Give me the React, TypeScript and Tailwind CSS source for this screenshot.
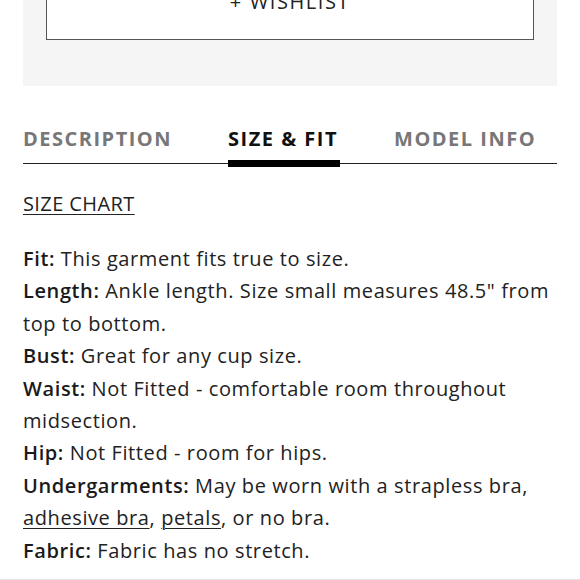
import React from 'react';

const font = { fontFamily: '"Open Sans", "Liberation Sans", sans-serif' };

const Label: React.FC<{ children: React.ReactNode }> = ({ children }) => (
  <span className="font-semibold text-[#1a1a1a]">{children}</span>
);

export default function App() {
  const tabs = [
    { label: 'DESCRIPTION', active: false },
    { label: 'SIZE & FIT', active: true },
    { label: 'MODEL INFO', active: false },
  ];

  return (
    <div className="w-[580px] h-[580px] overflow-hidden bg-white text-[#222] flex flex-col" style={font}>
      <div className="mx-[23px] h-[86px] shrink-0 bg-[#f5f5f5] px-[23px] flex flex-col">
        <div className="-mt-[30px] h-[70px] border border-[#555] bg-white flex items-center justify-center">
          <span className="text-[20px] tracking-[0.08em] text-[#222] pb-[6px]">+ WISHLIST</span>
        </div>
      </div>

      <div className="ml-[23px] w-[534px] mt-[38px]">
        <div className="flex gap-[56px] border-b border-[#222]">
          {tabs.map(t => (
            <div key={t.label} className="relative pb-[9px]">
              <span
                className={`text-[20px] font-bold tracking-[0.075em] ${
                  t.active ? 'text-[#111]' : 'text-[#777]'
                }`}
              >
                {t.label}
              </span>
              {t.active && (
                <div className="absolute left-0 right-[-2px] bottom-[-4px] h-[7px] bg-black" />
              )}
            </div>
          ))}
        </div>

        <div className="mt-[25px]">
          <a
            href="#"
            className="text-[20px] tracking-[0.02em] underline underline-offset-[3px] decoration-1 text-[#222]"
          >
            SIZE CHART
          </a>
        </div>

        <div className="mt-[24px] w-[560px] text-[20px] tracking-[0.03em] leading-[32.4px]">
          <p><Label>Fit:</Label> This garment fits true to size.</p>
          <p><Label>Length:</Label> Ankle length. Size small measures 48.5" from top to bottom.</p>
          <p><Label>Bust:</Label> Great for any cup size.</p>
          <p><Label>Waist:</Label> Not Fitted - comfortable room throughout midsection.</p>
          <p><Label>Hip:</Label> Not Fitted - room for hips.</p>
          <p>
            <Label>Undergarments:</Label> May be worn with a strapless bra,{' '}
            <a href="#" className="underline underline-offset-[3px] decoration-1">adhesive bra</a>,{' '}
            <a href="#" className="underline underline-offset-[3px] decoration-1">petals</a>, or no bra.
          </p>
          <p><Label>Fabric:</Label> Fabric has no stretch.</p>
        </div>
      </div>
      <div className="mt-auto h-px shrink-0 bg-[#e2e2e2]" />
    </div>
  );
}
